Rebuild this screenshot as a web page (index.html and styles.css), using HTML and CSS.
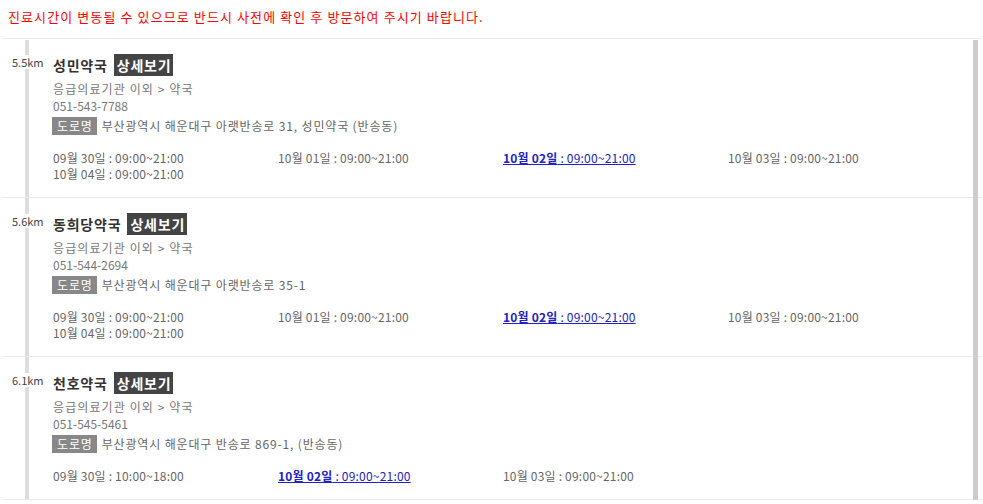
FILE: index.html
```html
<!DOCTYPE html>
<html>
  <head>
    <title>약국 목록</title>
    <meta charset="utf-8" />
    <meta name="viewport" content="width=device-width, initial-scale=1.0" />

    <link rel="stylesheet" href="styles.css">
  </head>
  <body>
    <p class="notice">진료시간이 변동될 수 있으므로 반드시 사전에 확인 후 방문하여 주시기 바랍니다.</p>

    <div class="list">
      <div class="item">
        <div class="dist"><span>5.5km</span></div>
        <div class="info">
          <div class="title">성민약국 <a class="more" href="#">상세보기</a></div>
          <div class="line">응급의료기관 이외 &gt; 약국</div>
          <div class="line phone">051-543-7788</div>
          <div class="addr"><span class="road">도로명</span> 부산광역시 해운대구 아랫반송로 31, 성민약국 (반송동)</div>
          <ul class="hours">
            <li>09월 30일 : 09:00~21:00</li>
            <li>10월 01일 : 09:00~21:00</li>
            <li class="today"><b>10월 02일</b> : 09:00~21:00</li>
            <li>10월 03일 : 09:00~21:00</li>
            <li>10월 04일 : 09:00~21:00</li>
          </ul>
        </div>
      </div>

      <div class="item">
        <div class="dist"><span>5.6km</span></div>
        <div class="info">
          <div class="title">동희당약국 <a class="more" href="#">상세보기</a></div>
          <div class="line">응급의료기관 이외 &gt; 약국</div>
          <div class="line phone">051-544-2694</div>
          <div class="addr"><span class="road">도로명</span> 부산광역시 해운대구 아랫반송로 35-1</div>
          <ul class="hours">
            <li>09월 30일 : 09:00~21:00</li>
            <li>10월 01일 : 09:00~21:00</li>
            <li class="today"><b>10월 02일</b> : 09:00~21:00</li>
            <li>10월 03일 : 09:00~21:00</li>
            <li>10월 04일 : 09:00~21:00</li>
          </ul>
        </div>
      </div>

      <div class="item">
        <div class="dist"><span>6.1km</span></div>
        <div class="info">
          <div class="title">천호약국 <a class="more" href="#">상세보기</a></div>
          <div class="line">응급의료기관 이외 &gt; 약국</div>
          <div class="line phone">051-545-5461</div>
          <div class="addr"><span class="road">도로명</span> 부산광역시 해운대구 반송로 869-1, (반송동)</div>
          <ul class="hours">
            <li>09월 30일 : 10:00~18:00</li>
            <li class="today"><b>10월 02일</b> : 09:00~21:00</li>
            <li>10월 03일 : 09:00~21:00</li>
          </ul>
        </div>
      </div>

      <div class="scroll-thumb"></div>
    </div>
  </body>
</html>
```

FILE: styles.css
```css
body {
  margin: 0;
  background-color: #fff;
  font-family: "Noto Sans CJK KR", "Noto Sans", sans-serif;
  color: #666;
  overflow: hidden;
}

.notice {
  margin: 0;
  padding: 7px 8px 11px;
  font-size: 13px;
  line-height: 20px;
  letter-spacing: 1.1px;
  color: #f00;
}

.list {
  position: relative;
  margin: 0 1px 0 2px;
  border-top: 1px solid #ebebeb;
  background: linear-gradient(#ddd, #ddd) no-repeat 23px 1px / 4px 100%;
}

.scroll-thumb {
  position: absolute;
  top: 1px;
  right: 4px;
  width: 5px;
  height: 480px;
  background-color: #ccc;
}

.item {
  display: flex;
  padding: 15px 0 15px 10px;
  border-bottom: 1px solid #ebebeb;
}

.dist {
  width: 41px;
  flex-shrink: 0;
  padding-top: 1px;
}

.dist span {
  display: block;
  width: fit-content;
  background-color: #fff;
  font-size: 11px;
  line-height: 14px;
  color: #444;
}

.info {
  flex-grow: 1;
}

.title {
  display: flex;
  align-items: center;
  gap: 6px;
  height: 22px;
  margin-bottom: 4px;
  font-size: 14px;
  font-weight: bold;
  letter-spacing: 0.8px;
  color: #333;
}

.more {
  display: inline-block;
  padding: 0 2px 0 3px;
  line-height: 22px;
  background-color: #444;
  color: #fff;
  text-decoration: none;
}

.line {
  font-size: 12px;
  line-height: 17px;
  letter-spacing: 1.1px;
  color: #777;
}

.line.phone {
  letter-spacing: 0;
}

.addr {
  display: flex;
  align-items: center;
  gap: 5px;
  margin-top: 3px;
  margin-left: -1px;
  font-size: 12px;
  line-height: 18px;
  letter-spacing: 0.85px;
  color: #666;
}

.road {
  padding: 0 4px 0 5px;
  background-color: #888;
  color: #fff;
}

.hours {
  display: grid;
  grid-template-columns: repeat(4, 225px);
  margin: 15px 0 0;
  padding: 0;
  list-style: none;
  font-size: 12px;
  line-height: 16px;
  letter-spacing: 0.2px;
  color: #666;
}

.hours .today {
  color: #2121c6;
  text-decoration: underline;
}
```
